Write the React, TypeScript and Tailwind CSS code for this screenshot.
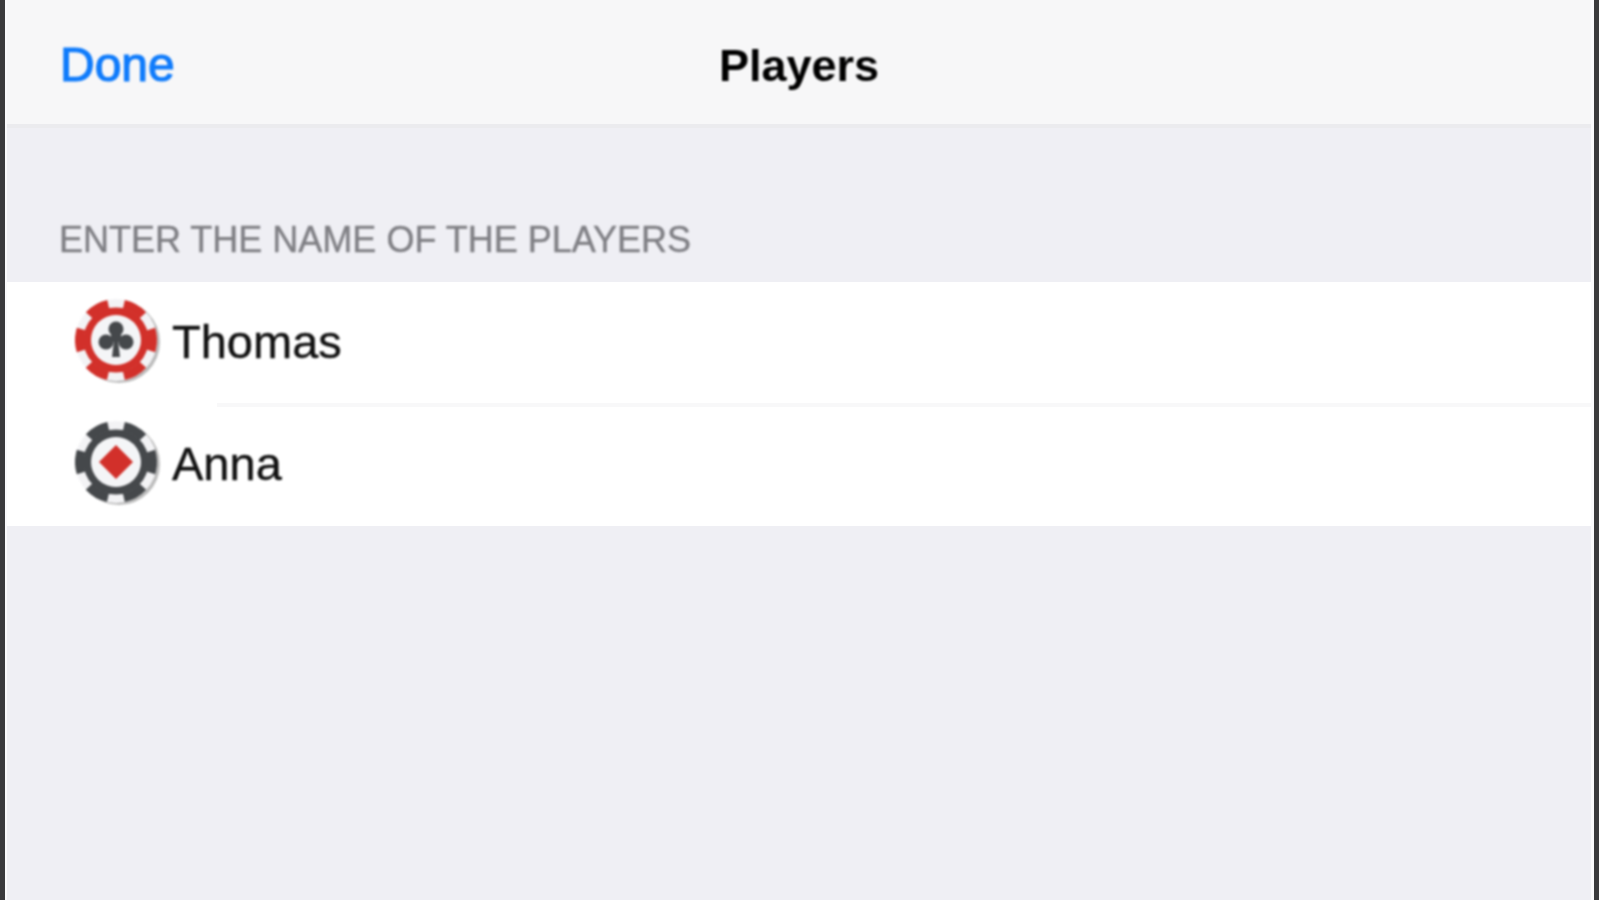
const font = "font-['Liberation_Sans',Arial,sans-serif]";

function Chip({ color, children }: { color: string; children: React.ReactNode }) {
  // poker chip: solid ring with 6 teeth, drop shadow to the lower right
  return (
    <svg width="96" height="96" viewBox="0 0 96 96" className="mb-[7px] shrink-0 blur-[0.8px]">
      <circle cx="51" cy="50" r="41" fill="#8f8f8f" opacity="0.6" />
      <circle cx="48" cy="48" r="41" fill="#f3f3f5" />
      <circle cx="48" cy="48" r="28.5" fill="none" stroke={color} strokeWidth="8" />
      <circle
        cx="48"
        cy="48"
        r="36.5"
        fill="none"
        stroke={color}
        strokeWidth="9"
        strokeDasharray="22.2 16"
        transform="rotate(-77.5 48 48)"
      />
      <circle cx="48" cy="48" r="25" fill="#f4f5f7" />
      {children}
    </svg>
  );
}

function Club() {
  return (
    <g fill="#45484b">
      <circle cx="48" cy="37" r="7.5" />
      <circle cx="38" cy="50" r="7.5" />
      <circle cx="58" cy="50" r="7.5" />
      <rect x="43" y="38" width="10" height="12" />
      <path d="M46 48h4l2 17h-8z" />
    </g>
  );
}

function Diamond() {
  return <path d="M48 31 L65 48 L48 65 L31 48 Z" fill="#d2302a" />;
}

function PlayerRow({ name, chip, last }: { name: string; chip: React.ReactNode; last?: boolean }) {
  return (
    <div className="relative flex h-[122px] items-center pl-[61px]">
      {chip}
      <span className="mb-[3px] ml-[8px] text-[47px] leading-none text-[#111] [-webkit-text-stroke:0.4px_#111] blur-[0.8px]">{name}</span>
      {!last && <div className="absolute bottom-[-3px] left-[210px] right-0 z-10 h-[4px] bg-[#f8f8f9]" />}
    </div>
  );
}

export default function App() {
  return (
    <div className={`${font} h-[900px] w-[1599px] overflow-hidden bg-[#3a3a3c] px-[5px]`}>
      <div className="h-full border-l-[2px] border-r-[3px] border-[#fafafc] bg-[#efeff4]">
        <header className="relative flex h-[128px] items-center justify-between border-b-[4px] border-[#ebebee] bg-[#f7f7f8] pl-[53px] pt-[5px]">
          <span className="text-[48px] leading-none text-[#0f7bfb] [-webkit-text-stroke:1.2px_#0f7bfb] blur-[0.8px]">Done</span>
          <span className="absolute left-0 right-0 pt-[1px] text-center text-[45px] leading-none font-bold text-black blur-[0.8px]">Players</span>
        </header>
        <div className="flex h-[154px] items-end pb-[24px] pl-[52px] text-[36px] leading-none text-[#7f7f84] [-webkit-text-stroke:0.4px_#7f7f84] blur-[0.8px]">
          ENTER THE NAME OF THE PLAYERS
        </div>
        <div className="bg-white">
          <PlayerRow name="Thomas" chip={<Chip color="#d2302a"><Club /></Chip>} />
          <PlayerRow name="Anna" chip={<Chip color="#45484b"><Diamond /></Chip>} last />
        </div>
      </div>
    </div>
  );
}
